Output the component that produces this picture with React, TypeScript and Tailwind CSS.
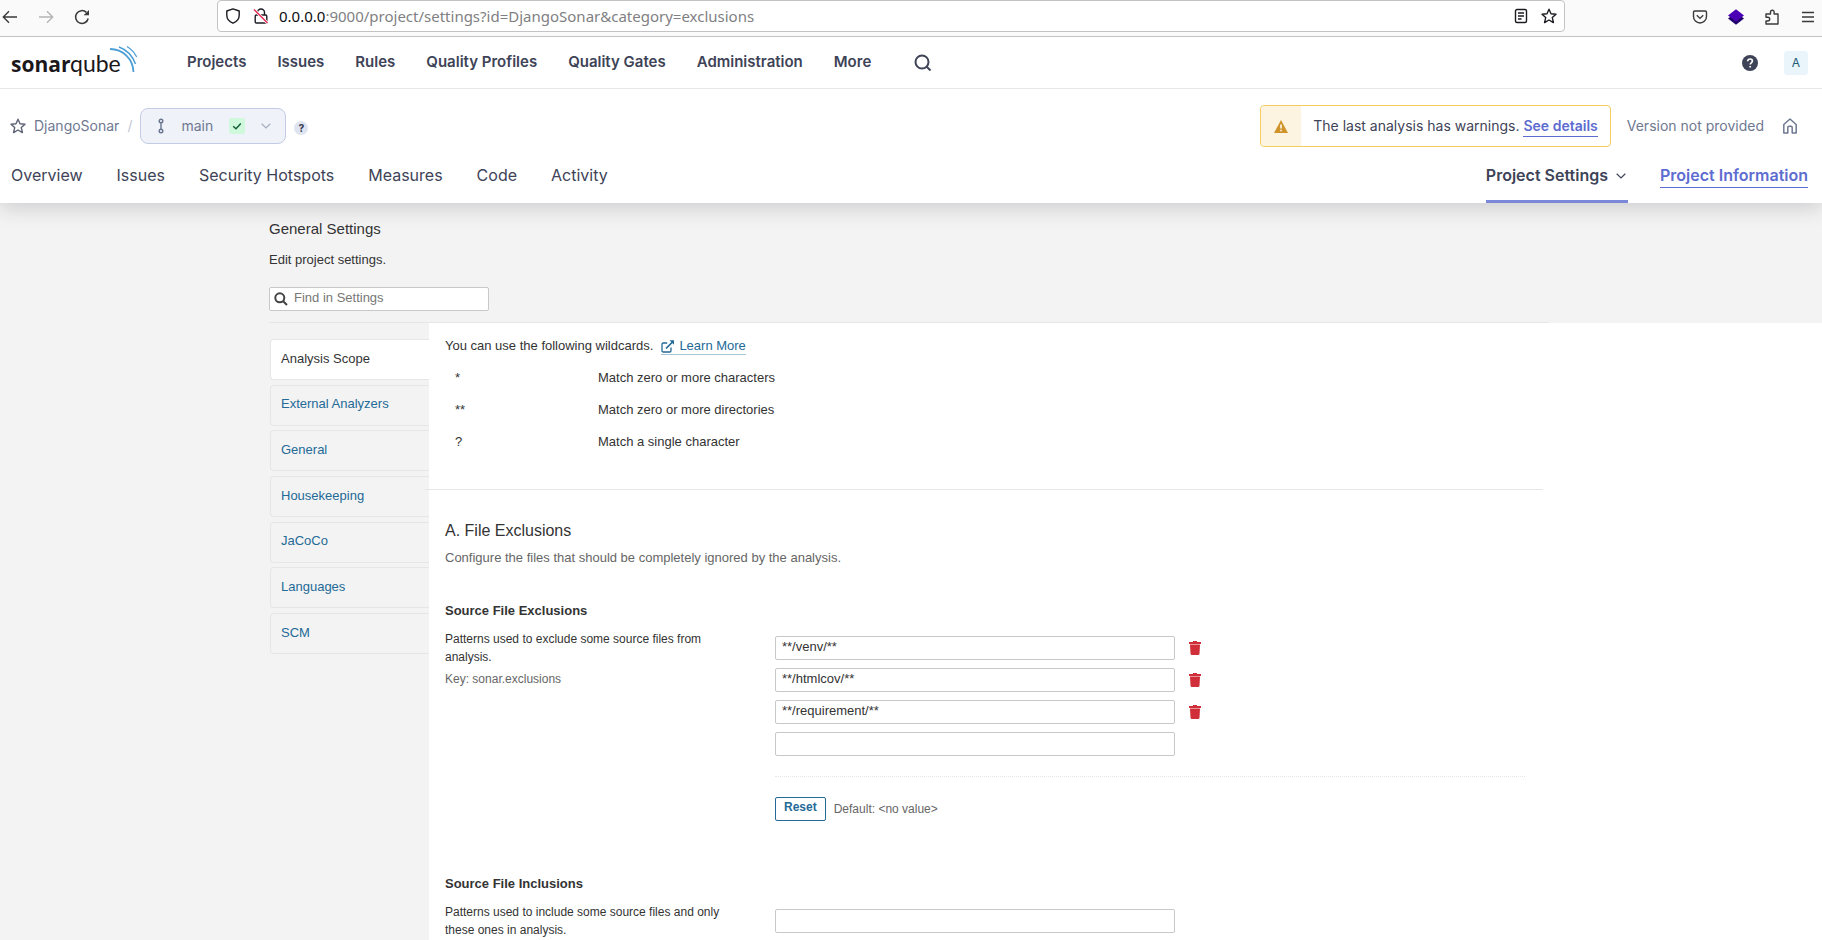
import type { ReactNode } from "react"

const navLinks = ["Projects", "Issues", "Rules", "Quality Profiles", "Quality Gates", "Administration", "More"]

const tabs = ["Overview", "Issues", "Security Hotspots", "Measures", "Code", "Activity"]

const categories = [
  "Analysis Scope",
  "External Analyzers",
  "General",
  "Housekeeping",
  "JaCoCo",
  "Languages",
  "SCM",
]

const wildcards = [
  { pattern: "*", text: "Match zero or more characters" },
  { pattern: "**", text: "Match zero or more directories" },
  { pattern: "?", text: "Match a single character" },
]

function ToolbarButton({ label, children }: { label: string; children: ReactNode }) {
  return (
    <button type="button" aria-label={label} className="flex size-4 shrink-0 items-center justify-center">
      {children}
    </button>
  )
}

function StarIcon({ className }: { className: string }) {
  return (
    <svg viewBox="0 0 16 16" fill="none" stroke="currentColor" strokeWidth="1.4" strokeLinejoin="round" className={className}>
      <path d="M8 1.2 10 5.7 15 6.2 11.3 9.6 12.4 14.6 8 12 3.6 14.6 4.7 9.6 1 6.2 6 5.7Z" />
    </svg>
  )
}

function ChevronIcon({ className }: { className: string }) {
  return (
    <svg viewBox="0 0 10 10" fill="none" stroke="currentColor" strokeWidth="1.2" className={className}>
      <path d="M0.7 2.8 5 7 9.3 2.8" />
    </svg>
  )
}

function TrashIcon() {
  return (
    <svg viewBox="0 0 12 14" className="h-3.5 w-3 text-[#d02f3a]" fill="currentColor">
      <path d="M0 1h4V0h4v1h4v2H0z" />
      <path d="M1 3h10v1H1z" opacity="0.5" />
      <path d="M1 4h10l-.5 8.500a1.500 1.500 0 0 1-1.500 1.500H3a1.500 1.500 0 0 1-1.500-1.500z" />
    </svg>
  )
}

function BrowserBar() {
  return (
    <div className="flex h-[37px] items-start border-b border-[#c3c3c6] bg-[#fafafa] text-[#3a3a3c]">
      <div className="flex h-[33px] w-[217px] shrink-0 items-center gap-5 pl-0.5">
        <ToolbarButton label="Back">
          <svg viewBox="0 0 16 16" className="size-4" fill="none" stroke="currentColor" strokeWidth="1.4">
            <path d="M15 8H1.5M7 2.2 1.3 8 7 13.8" />
          </svg>
        </ToolbarButton>
        <ToolbarButton label="Forward">
          <svg viewBox="0 0 16 16" className="size-4 text-[#b5b5b6]" fill="none" stroke="currentColor" strokeWidth="1.4">
            <path d="M1 8h13.5M9 2.2 14.7 8 9 13.8" />
          </svg>
        </ToolbarButton>
        <ToolbarButton label="Reload">
          <svg viewBox="0 0 16 16" className="size-4" fill="none" stroke="currentColor" strokeWidth="1.5">
            <path d="M14.2 9.5A6.4 6.4 0 1 1 12.4 3.4" />
            <path d="M15 1v5.3H9.6z" fill="currentColor" stroke="none" />
          </svg>
        </ToolbarButton>
      </div>

      <div className="flex h-8 min-w-0 flex-1 items-center rounded border border-[#c3c3c6] bg-white px-[7px] text-[#1c1b22]">
        <svg viewBox="0 0 16 16" className="size-4 shrink-0" fill="none" stroke="currentColor" strokeWidth="1.4" strokeLinejoin="round">
          <path d="M8 .9 14.2 3v4.2c0 3.600-2.400 6.400-6.200 8-3.800-1.600-6.200-4.400-6.200-8V3Z" />
        </svg>
        <svg viewBox="0 0 16 16" className="ml-3 size-4 shrink-0" fill="none" stroke="currentColor" strokeWidth="1.4">
          <path d="M4.500 7V4.500a3.500 3.500 0 0 1 7 0V7" />
          <rect x="2.200" y="7" width="11.600" height="8" rx="1.200" />
          <path d="M1 1.500 14.500 15" stroke="#fff" strokeWidth="3" />
          <path d="M1 1.500 14.500 15" stroke="#e22850" strokeWidth="1.500" />
        </svg>
        <p className="ml-2.5 flex-1 font-['Noto_Sans',sans-serif] text-[15px] leading-5 text-[#7f7f83]">
          <span className="text-[#0c0c0d]">0.0.0.0</span>
          :9000/project/settings?id=DjangoSonar&amp;category=exclusions
        </p>
        <svg viewBox="0 0 16 16" className="mr-3 size-4" fill="none" stroke="currentColor" strokeWidth="1.4">
          <rect x="2.500" y="1.500" width="11" height="13" rx="1.500" />
          <path d="M5 5h6M5 8h6M5 11h3.500" />
        </svg>
        <StarIcon className="size-4" />
      </div>

      <div className="flex h-[33px] w-[257px] shrink-0 items-center justify-end gap-5 pr-1.5">
        <ToolbarButton label="Save to Pocket">
          <svg viewBox="0 0 16 16" className="size-4" fill="none" stroke="currentColor" strokeWidth="1.4">
            <path d="M2.700 2h10.600c.7 0 1.200.5 1.200 1.200V7.500a6.500 6.500 0 0 1-13 0V3.200C1.500 2.500 2 2 2.700 2Z" />
            <path d="M4.800 6.300 8 9.400l3.200-3.100" />
          </svg>
        </ToolbarButton>
        <ToolbarButton label="Extension">
          <svg viewBox="0 0 16 16" className="size-4">
            <path d="M8 3.500 16 9.500 8 15.800 0 9.500Z" fill="#20006a" />
            <path d="M8 .2 16 6.500 8 12.500 0 6.500Z" fill="#4a00b4" />
          </svg>
        </ToolbarButton>
        <ToolbarButton label="Extensions">
          <svg viewBox="0 0 16 16" className="size-4" fill="none" stroke="currentColor" strokeWidth="1.4" strokeLinejoin="round">
            <path d="M2 7.500V5h4.500V3a1.800 1.800 0 0 1 3.600 0v2H14v10H2v-3h1.800a1.900 1.900 0 0 0 0-3.800H2Z" />
          </svg>
        </ToolbarButton>
        <ToolbarButton label="Open menu">
          <svg viewBox="0 0 16 16" className="size-4" fill="none" stroke="currentColor" strokeWidth="1.3">
            <path d="M2 3.500h12M2 8h12M2 12.500h12" />
          </svg>
        </ToolbarButton>
      </div>
    </div>
  )
}

function Logo() {
  return (
    <a href="#" aria-label="SonarQube" className="flex w-[175px] shrink-0 pl-[11px]">
      <svg viewBox="0 0 126 36" className="h-9 w-[126px]">
        <text x="0" y="27" fontFamily="'Open Sans', sans-serif" fontSize="21" fontWeight="700" fill="#1b171b">
          sonar
        </text>
        <text x="59" y="27" fontFamily="Lato, sans-serif" fontSize="23" fill="#1b171b">
          qube
        </text>
        <g fill="none" stroke="#4b9fd5">
          <path d="M99 4C112 4 122 14 122.500 27" strokeWidth="1.800" />
          <path d="M108 2C115 4.500 121.500 11 124.500 19" strokeWidth="1.500" />
          <path d="M116 1.500C120 4 123.500 7.500 125.700 12" strokeWidth="1.200" />
        </g>
      </svg>
    </a>
  )
}

function GlobalNav() {
  return (
    <header className="relative z-20 flex h-[52px] items-center border-b border-[#e6e7e9] bg-white pr-[14px] font-['Inter',sans-serif]">
      <Logo />
      <nav className="flex flex-1 items-center gap-[31px] pl-3 text-[15px] leading-5 font-semibold text-[#3e4357]">
        {navLinks.map((link) => (
          <a key={link} href="#" className="pb-0.5">
            {link}
          </a>
        ))}
        <button type="button" aria-label="Search" className="ml-3">
          <svg viewBox="0 0 18 18" className="size-[18px]" fill="none" stroke="currentColor" strokeWidth="2">
            <circle cx="8" cy="8" r="6.500" />
            <path d="m12.500 12.500 4 4" />
          </svg>
        </button>
      </nav>
      <button type="button" aria-label="Help" className="mr-[26px]">
        <svg viewBox="0 0 16 16" className="size-4">
          <circle cx="8" cy="8" r="8" fill="#3e4357" />
          <path d="M5.700 6.300C5.700 4.900 6.700 4 8.100 4s2.300.9 2.300 2.100c0 1.700-2.200 1.700-2.200 3.400M8.200 10.900v1.700" fill="none" stroke="#fff" strokeWidth="1.700" />
        </svg>
      </button>
      <button type="button" className="size-6 rounded-sm bg-[#e9f4fb] text-xs leading-5 text-[#215a75]">
        A
      </button>
    </header>
  )
}

function ProjectHeader() {
  return (
    <div className="relative z-10 bg-white font-['Inter',sans-serif] shadow-[0_4px_20px_rgba(40,42,54,0.2)]">
      <div className="flex h-[74px] items-center pr-6 pl-2.5 text-sm text-[#6f7891]">
        <button type="button" aria-label="Add to favorites" className="text-[#5d6275]">
          <StarIcon className="size-4" />
        </button>
        <a href="#" className="ml-2">
          DjangoSonar
        </a>
        <span className="mx-2 text-[#c4c8d3]">/</span>
        <button
          type="button"
          className="flex h-9 w-[146px] items-center rounded-lg border border-[#c3cce4] bg-[#eff2f9] pl-4"
        >
          <svg viewBox="0 0 8 16" className="h-4 w-2 text-[#6a7590]" fill="none" stroke="currentColor" strokeWidth="1.400">
            <circle cx="4" cy="3" r="1.800" />
            <circle cx="4" cy="13" r="1.800" />
            <path d="M4 5v6" />
          </svg>
          <span className="ml-4">main</span>
          <span className="ml-4 flex size-4 items-center justify-center rounded-xs bg-[#cff8dc] text-[#14603c]">
            <svg viewBox="0 0 10 10" className="size-2.5" fill="none" stroke="currentColor" strokeWidth="1.500">
              <path d="M1.200 5.200 4 7.800 8.800 2.600" />
            </svg>
          </span>
          <ChevronIcon className="ml-4 size-2.5 text-[#a6adbf]" />
        </button>
        <button
          type="button"
          aria-label="Branch help"
          className="mt-1 ml-2 size-3.5 rounded-full bg-[#dfe4f1] text-[10px] leading-3.5 font-extrabold text-[#3e4357]"
        >
          ?
        </button>

        <div className="ml-auto flex h-[42px] items-center rounded border border-[#f5cc5e] pr-3 text-[#3e4357]">
          <span className="flex h-full w-10 items-center justify-center rounded-l bg-[#fcf4e0]">
            <svg viewBox="0 0 14 13" className="h-[13px] w-[14px]">
              <path d="M7 0 14 13H0Z" fill="#d1942b" />
              <path d="M7 4.500v4M7 9.700v1.600" stroke="#fff" strokeWidth="1.500" />
            </svg>
          </span>
          <span className="ml-3">The last analysis has warnings.</span>
          <a href="#" className="ml-1 border-b border-[#5d6cd0] leading-5 font-semibold text-[#5d6cd0]">
            See details
          </a>
        </div>
        <span className="ml-4">Version not provided</span>
        <a href="#" aria-label="Set as homepage" className="ml-[18px]">
          <svg viewBox="0 0 16 16" className="size-4" fill="none" stroke="currentColor" strokeWidth="1.500" strokeLinejoin="round">
            <path d="M1.800 6.500 8 1l6.200 5.500V15h-4V9.500c0-.8-.6-1.200-1.200-1.200H7c-.6 0-1.200.4-1.200 1.200V15h-4Z" />
          </svg>
        </a>
      </div>

      <nav className="flex h-10 items-stretch pr-[14px] pl-[11px] text-[16px] leading-6 text-[#3e4357]">
        <div className="flex gap-[34px]">
          {tabs.map((tab) => (
            <a key={tab} href="#">
              {tab}
            </a>
          ))}
        </div>
        <button type="button" className="ml-auto flex border-b-3 border-[#7b87d9] font-semibold">
          Project Settings
          <ChevronIcon className="mt-2 mr-0.5 ml-2 size-2.5" />
        </button>
        <a href="#" className="ml-8 self-start border-b border-[#5d6cd0] font-semibold text-[#5d6cd0]">
          Project Information
        </a>
      </nav>
    </div>
  )
}

function TextField({ label, value = "" }: { label: string; value?: string }) {
  return (
    <input
      type="text"
      aria-label={label}
      defaultValue={value}
      className="h-6 w-[400px] rounded-xs border border-[#c8c8c8] bg-white px-1.5 pb-1 text-[13px] text-[#333]"
    />
  )
}

type SettingProps = {
  title: string
  description: string
  settingKey?: string
  values: string[]
}

function Setting({ title, description, settingKey, values }: SettingProps) {
  return (
    <div className="flex pr-[18px]">
      <div className="w-[330px] shrink-0">
        <h3 className="text-[13px] leading-5 font-bold">{title}</h3>
        <p className="mt-[9px] w-[280px] text-[12px] leading-[18px]">{description}</p>
        {settingKey && <p className="mt-1 text-[12px] leading-[18px] text-[#666]">Key: {settingKey}</p>}
      </div>
      <div className="min-w-0 flex-1 pt-[35px]">
        <ul className="flex flex-col gap-2">
          {values.map((value) => (
            <li key={value} className="flex items-center gap-3.5">
              <TextField label={title} value={value} />
              <button type="button" aria-label={`Delete ${value}`}>
                <TrashIcon />
              </button>
            </li>
          ))}
          <li className="flex">
            <TextField label={`${title}, new value`} />
          </li>
        </ul>
        {values.length > 0 && (
          <div className="mt-5 flex items-center gap-2 border-t border-dotted border-[#e6e6e6] pt-5">
            <button
              type="button"
              className="h-6 rounded-xs border border-[#236a97] px-2 pb-1 text-[12px] leading-4 font-bold text-[#236a97]"
            >
              Reset
            </button>
            <span className="text-[12px] leading-[18px] text-[#666]">Default: &lt;no value&gt;</span>
          </div>
        )}
      </div>
    </div>
  )
}

export default function App() {
  return (
    <div className="flex min-h-screen flex-col bg-[#f3f3f3] font-['Liberation_Sans',Arial,sans-serif] text-[13px] text-[#333]">
      <BrowserBar />
      <GlobalNav />
      <ProjectHeader />

      <div className="flex h-[119px] flex-col items-start pt-4 pl-[269px]">
        <h1 className="text-[15px] leading-5">General Settings</h1>
        <p className="mt-[13px] leading-4">Edit project settings.</p>
        <label className="mt-[19px] flex h-6 w-[220px] shrink-0 items-center rounded-xs border border-[#c8c8c8] bg-white pl-1">
          <svg viewBox="0 0 14 14" className="size-3.5 shrink-0 text-[#444]" fill="none" stroke="currentColor" strokeWidth="2">
            <circle cx="5.800" cy="5.800" r="4.500" />
            <path d="m9.200 9.200 3.800 3.800" />
          </svg>
          <input
            type="search"
            aria-label="Find in Settings"
            placeholder="Find in Settings"
            className="ml-1.5 w-full pb-0.5 text-[13px] leading-4 outline-none placeholder:text-[#777]"
          />
        </label>
      </div>

      <div className="mr-[273px] ml-[269px] h-px shrink-0 bg-[#e6e6e6]" />

      <div className="flex flex-1">
        <aside className="w-[429px] shrink-0 pt-4 pl-[270px]">
          <nav className="flex h-[315px] flex-col justify-between">
            {categories.map((category, index) => (
              <a
                key={category}
                href="#"
                className={
                  index === 0
                    ? "flex h-[41px] items-center rounded-l border border-r-0 border-[#e6e6e6] bg-white pb-0.5 pl-2.5"
                    : "flex h-[41px] items-center rounded-l border border-r-0 border-[#e6e6e6] pb-0.5 pl-2.5 text-[#236a97]"
                }
              >
                {category}
              </a>
            ))}
          </nav>
        </aside>

        <main className="min-w-0 flex-1 bg-white pr-[279px]">
          <section className="pt-[13px] pl-4">
            <div className="flex h-5 items-center gap-2">
              <p>You can use the following wildcards.</p>
              <a href="#" className="flex items-center gap-1 border-b border-[#a6c7da] leading-4 text-[#236a97]">
                <svg viewBox="0 0 14 14" className="size-3.5" fill="none" stroke="currentColor" strokeWidth="1.300">
                  <path d="M10 8.500v3.300c0 .7-.5 1.200-1.200 1.200H2.200C1.500 13 1 12.500 1 11.800V5.200C1 4.500 1.500 4 2.200 4h4" />
                  <path d="M5 9.500 12 2.500" strokeWidth="1.700" />
                  <path d="M8.500 1.200H13v4.500Z" fill="currentColor" stroke="none" />
                </svg>
                Learn More
              </a>
            </div>
            <table className="mt-1.5 ml-2.5">
              <tbody>
                {wildcards.map(({ pattern, text }) => (
                  <tr key={pattern} className="h-8">
                    <td className="w-[143px] p-0">{pattern}</td>
                    <td className="p-0">{text}</td>
                  </tr>
                ))}
              </tbody>
            </table>
          </section>

          <hr className="mt-[31px] -ml-1 border-[#e6e6e6]" />

          <section className="pt-[29px] pl-4">
            <h2 className="text-[16px] leading-6">A. File Exclusions</h2>
            <p className="mt-[5px] leading-5 text-[#666]">Configure the files that should be completely ignored by the analysis.</p>
            <div className="mt-[33px] flex flex-col gap-[53px]">
              <Setting
                title="Source File Exclusions"
                description="Patterns used to exclude some source files from analysis."
                settingKey="sonar.exclusions"
                values={["**/venv/**", "**/htmlcov/**", "**/requirement/**"]}
              />
              <Setting
                title="Source File Inclusions"
                description="Patterns used to include some source files and only these ones in analysis."
                values={[]}
              />
            </div>
          </section>
        </main>
      </div>
    </div>
  )
}
